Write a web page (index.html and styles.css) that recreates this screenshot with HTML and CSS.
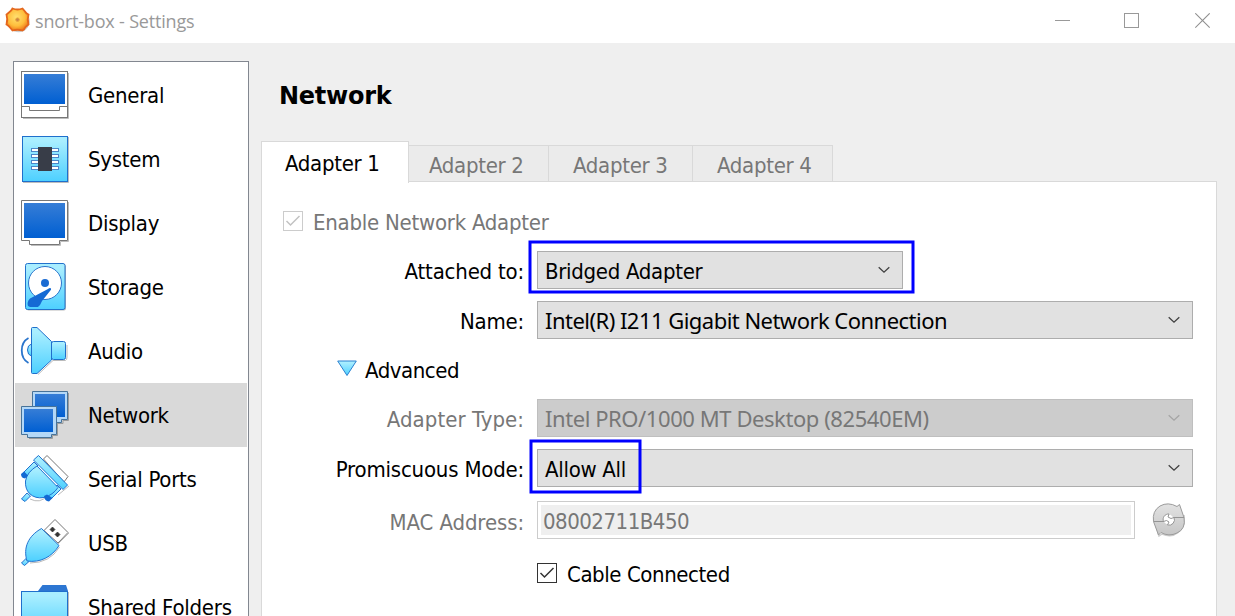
FILE: index.html
```html
<!DOCTYPE html>
<html lang="en">
<head>
<meta charset="utf-8">
<title>snort-box - Settings</title>
<link rel="stylesheet" href="styles.css">
</head>
<body>
<svg class="defs" width="0" height="0" aria-hidden="true">
  <defs>
    <linearGradient id="blue" x1="0" y1="0" x2="0" y2="1"><stop offset="0" stop-color="#367dd6"/><stop offset="1" stop-color="#005fd2"/></linearGradient>
    <linearGradient id="cyan" x1="0" y1="0" x2="0" y2="1"><stop offset=".1" stop-color="#a9eeff"/><stop offset="1" stop-color="#4dd0ff"/></linearGradient>
    <linearGradient id="gray" x1="0" y1="0" x2="0" y2="1"><stop offset="0" stop-color="#e2e2e2"/><stop offset="1" stop-color="#c6c6c6"/></linearGradient>
    <radialGradient id="gold" cx=".45" cy=".4" r=".6"><stop offset="0" stop-color="#ffe070"/><stop offset=".65" stop-color="#ffbe3c"/><stop offset="1" stop-color="#f0801c"/></radialGradient>
  </defs>
</svg>
<div class="window">
  <header class="titlebar">
    <svg class="app-icon" width="28" height="28" viewBox="0 0 28 28">
      <circle cx="14.700" cy="15.200" r="11" fill="#aaa" opacity=".6"/>
      <path d="M8.500 2.500 Q13.500 4.500 18.500 2.500 L21 5.500 Q22 7.500 24.500 8.500 Q23 13.500 24.500 18.500 L21.500 21 Q20.500 23.500 18.500 24.500 Q13.500 23 8.500 24.500 L6 21.500 Q4.500 19.500 2.500 18.500 Q4 13.500 2.500 8.500 L5.500 6 Q7.500 4.500 8.500 2.500Z" fill="url(#gold)" stroke="#e4661c" stroke-width="1.800"/>
      <circle cx="13.500" cy="13.700" r="1.800" fill="#c98446" stroke="#e8a33c"/>
    </svg>
    <span class="title">snort-box - Settings</span>
    <div class="controls">
      <svg width="16" height="16"><path d="M0 7.500H15" stroke="#999"/></svg>
      <svg width="16" height="16"><rect x=".5" y=".5" width="14" height="14" fill="none" stroke="#999"/></svg>
      <svg width="16" height="16"><path d="M.3 .3L14.700 14.700M14.700 .3L.3 14.700" stroke="#909090" stroke-width="1.100"/></svg>
    </div>
  </header>
  <div class="body">
    <nav class="sidebar">
      <div class="item">
        <svg class="icon" viewBox="0 0 50 50"><path d="M3 48.500H48.500V3" stroke="#bdbdbd" fill="none"/><rect x="1.500" y="1.500" width="46" height="46" fill="#fff" stroke="#777"/><rect x="4" y="4" width="41" height="30" fill="url(#blue)"/><path d="M1.500 36.500H9.500V40.500H39.500V36.500H47.500" fill="none" stroke="#777"/></svg>
        <span>General</span>
      </div>
      <div class="item">
        <svg class="icon" viewBox="0 0 50 50"><path d="M3 48.500H48.500V3" stroke="#bdbdbd" fill="none"/><rect x="2.500" y="2.500" width="45" height="45" fill="url(#cyan)" stroke="#1f6fcc"/><g fill="#fff" stroke="#4a86c8"><rect x="11.500" y="14.500" width="27" height="3"/><rect x="11.500" y="20.500" width="27" height="3"/><rect x="11.500" y="26.500" width="27" height="3"/><rect x="11.500" y="32.500" width="27" height="3"/></g><rect x="18" y="13" width="14" height="24" fill="#383d48"/></svg>
        <span>System</span>
      </div>
      <div class="item">
        <svg class="icon" viewBox="0 0 50 50"><path d="M11 47.500H40.500V43.500H48.500V4" stroke="#bdbdbd" fill="none"/><path d="M1.500 2.500H47.500V42.500H39.500V46.500H9.500V42.500H1.500Z" fill="#fff" stroke="#777"/><rect x="4" y="5" width="41" height="35" fill="url(#blue)"/></svg>
        <span>Display</span>
      </div>
      <div class="item">
        <svg class="icon" viewBox="0 0 50 50"><rect x="6.500" y="2.500" width="39.500" height="46" rx="2" fill="#bbb"/><rect x="5.500" y="1.500" width="39.500" height="46" rx="2" fill="url(#cyan)" stroke="#2372cc"/><circle cx="25" cy="21" r="16.500" fill="#fff" stroke="#2a75cc"/><circle cx="25" cy="21" r="4" fill="#1a6bd3"/><path d="M31 26.500Q30 25.500 28 27L10 36.500Q6.500 40 8 44L10 45H18Q20.500 43 22 39L30 29Q31.500 27.500 31 26.500Z" fill="#156ad4"/></svg>
        <span>Storage</span>
      </div>
      <div class="item">
        <svg class="icon" viewBox="0 0 50 50"><path d="M18 48.500L33 34.500H45.500Q47 34 47 31V19" fill="none" stroke="#bbb"/><g fill="url(#cyan)" stroke="#1f6fcc"><path d="M11.500 18Q7.500 19 7.500 24T11.500 30Z"/><rect x="31.500" y="15.500" width="14" height="18" rx="2"/><path d="M12.500 1.500H17L31.500 15.500V34L17 47.500H12.500Q11.500 47.500 11.500 46.500V2.500Q11.500 1.500 12.500 1.500Z"/></g><path d="M8.500 12C-.5 17 -.5 32 8.500 37" fill="none" stroke="#2a75cc" stroke-width="1.800"/></svg>
        <span>Audio</span>
      </div>
      <div class="item selected">
        <svg class="icon" viewBox="0 0 50 50"><path d="M37 33.500H43V30.500H48.500V3M9 48.500H32.500V45.500H37.500V18" fill="none" stroke="#9b9b9b"/><path d="M12.500 1.500H47.500V29.500H41.500V32.500H18.500V29.500H12.500Z" fill="#b4d8f7" stroke="#477399"/><rect x="15" y="4" width="30" height="23" fill="url(#blue)"/><path d="M1.500 16.500H36.500V44.500H31.500V47.500H7.500V44.500H1.500Z" fill="#b4d8f7" stroke="#477399"/><rect x="4" y="19" width="29" height="23" fill="url(#blue)"/></svg>
        <span>Network</span>
      </div>
      <div class="item">
        <svg class="icon" viewBox="0 0 50 50"><path d="M38 41L49 32M10 45Q20 50 27 42" fill="none" stroke="#bbb"/><path d="M23.500 5L27 1.500L48 22.500L44 28Z" fill="#fff" stroke="#777"/><g fill="url(#cyan)" stroke="#1f72d0"><path d="M4 18L14 8L18 12L7 23Z"/><path d="M27 42L37 31L41 35L31 45Z"/><path d="M17 12Q7 18 5.500 27Q5 35 9.500 39.500Q15 45 24 43.500Q33 41 38 33.500Z"/><path d="M1.500 45L7 39L10.500 42L5 47.500Z"/><path d="M13.500 6L18.500 1.500L47.500 31L43 35.500Z"/></g><path d="M1 20L4 17.500L8 21.500L5 24.500Q1 24 1 20ZM24 42L27 40.500L32.500 44L29 47.500Q24.500 47 24 42Z" fill="#1269d3"/></svg>
        <span>Serial Ports</span>
      </div>
      <div class="item">
        <svg class="icon" viewBox="0 0 50 50"><path d="M37 27L49 15M10 45Q30 45 39.500 29" fill="none" stroke="#bbb"/><path d="M35 1.500L48 14.500L38 25L24 12.500Z" fill="#fff" stroke="#777"/><path d="M32.500 9L35 11.500L32.500 14L30 11.500ZM37.500 14L40 16.500L37.500 19L35 16.500Z" fill="#333" stroke="#333" stroke-width=".7"/><g fill="url(#cyan)" stroke="#1f72d0"><path d="M1.500 45L6 40.500L9 43.500L4.500 47.500Z"/><path d="M21.500 10.500L39 27.500C32 39 20 45 7 43C3 30 8 18 21.500 10.500Z"/></g></svg>
        <span>USB</span>
      </div>
      <div class="item">
        <svg class="icon" viewBox="0 0 50 50"><path d="M48.500 10V50" stroke="#bbb"/><path d="M18 9L22.500 3H46L48 9Z" fill="#2d76d2"/><rect x="1.500" y="9.500" width="46" height="44" fill="url(#cyan)" stroke="#1f6fcc"/></svg>
        <span>Shared Folders</span>
      </div>
    </nav>
    <main class="main">
      <h1 class="heading">Network</h1>
      <div class="tabs">
        <div class="tab active">Adapter 1</div>
        <div class="tab">Adapter 2</div>
        <div class="tab">Adapter 3</div>
        <div class="tab">Adapter 4</div>
      </div>
      <section class="panel">
        <div class="enable disabled">
          <svg class="check" viewBox="0 0 20 20"><rect x=".5" y=".5" width="19" height="19" fill="#fff" stroke="#ccc"/><path d="M3.500 10L7.500 14L16.500 5" fill="none" stroke="#c2c2c2" stroke-width="1.500"/></svg>
          <span>Enable Network Adapter</span>
        </div>
        <div class="row attached">
          <span class="label">Attached to:</span>
          <div class="combo short"><span>Bridged Adapter</span><svg class="arrow" viewBox="0 0 12 8"><path d="M.7 1.200L6 6.200L11.300 1.200"/></svg></div>
        </div>
        <div class="row name">
          <span class="label">Name:</span>
          <div class="combo"><span class="device">Intel(R) I211 Gigabit Network Connection</span><svg class="arrow" viewBox="0 0 12 8"><path d="M.7 1.200L6 6.200L11.300 1.200"/></svg></div>
        </div>
        <div class="advanced">
          <svg width="20" height="17" viewBox="0 0 20 17"><path d="M.7 1H19.300L10 15.500Z" fill="url(#cyan)" stroke="#2a80d0"/></svg>
          <span>Advanced</span>
        </div>
        <div class="row type disabled">
          <span class="label">Adapter Type:</span>
          <div class="combo"><span class="device model">Intel PRO/1000 MT Desktop (82540EM)</span><svg class="arrow" viewBox="0 0 12 8"><path d="M.7 1.200L6 6.200L11.300 1.200"/></svg></div>
        </div>
        <div class="row mode">
          <span class="label">Promiscuous Mode:</span>
          <div class="combo"><span>Allow All</span><svg class="arrow" viewBox="0 0 12 8"><path d="M.7 1.200L6 6.200L11.300 1.200"/></svg></div>
        </div>
        <div class="row mac disabled">
          <span class="label">MAC Address:</span>
          <div class="field"><span>08002711B450</span></div>
          <svg class="refresh" width="34" height="34" viewBox="0 0 34 34"><path d="M3 20Q5 26 7 33L10 31Q25 37 32 21V12" fill="none" stroke="#ccc" stroke-width="1.500"/><path d="M1.500 18.500Q0 8 8 3Q16 -1.500 25 3.500L27.500 1.500L32 14.500Q34 26 25 30Q17 34 9 29.500L6.500 32Z" fill="url(#gray)" stroke="#9b9b9b"/><circle cx="16.500" cy="16.500" r="5" fill="#fff"/><path d="M11.500 18.500A5.500 5.500 0 0 1 17 11L16 14L19 15.500L22 14.500A5.500 5.500 0 0 1 15.500 22L17 19L14.500 17.500Z" fill="#fff" stroke="#949494"/><path d="M1.500 18.500H12M21.500 14.500H32" stroke="#949494"/></svg>
        </div>
        <div class="cable">
          <svg class="check" viewBox="0 0 20 20"><rect x=".5" y=".5" width="19" height="19" fill="#fff" stroke="#333"/><path d="M3.500 10L7.500 14L16.500 5" fill="none" stroke="#333" stroke-width="1.500"/></svg>
          <span>Cable Connected</span>
        </div>
      </section>
    </main>
  </div>
  <svg class="marks" width="1235" height="616"><g fill="none" stroke="#00f" stroke-width="3"><rect x="530" y="242" width="383" height="50"/><rect x="531" y="441" width="109" height="51"/></g></svg>
</div>
</body>
</html>
```
FILE: styles.css
```css
* { box-sizing: border-box; }
body {
  margin: 0;
  font: 22px/26px "DejaVu Sans Condensed", "DejaVu Sans", sans-serif;
  letter-spacing: -0.2px;
  color: #000;
}
svg { display: block; flex: none; }
.defs { position: absolute; }
.window {
  position: relative;
  width: 1235px;
  height: 616px;
  overflow: hidden;
  background: #efefef;
}
.titlebar {
  display: flex;
  height: 43px;
  padding-left: 4px;
  background: #fff;
}
.app-icon { margin-top: 6px; }
.title {
  margin: 8px 0 0 3px;
  font: 18px/26px "Open Sans", sans-serif;
  letter-spacing: -0.19px;
  color: #999;
}
.controls {
  display: flex;
  gap: 54px;
  margin-left: auto;
  padding: 13px 24px 0 0;
}
.controls svg:first-child { margin-right: -1px; }
.controls svg:last-child { margin-left: 1px; }

.body { display: flex; height: 573px; padding-top: 18px; }
.sidebar {
  width: 236px;
  height: 600px;
  margin-left: 13px;
  padding: 1px;
  background: #fff;
  border: 1px solid #828790;
  flex: none;
}
.item {
  display: flex;
  align-items: center;
  gap: 18px;
  height: 64px;
  padding-left: 5px;
  letter-spacing: -0.26px;
  white-space: nowrap;
}
.item span { padding-top: 2px; }
.icon { width: 50px; height: 50px; }
.selected { background: #d9d9d9; }

.main { width: 956px; margin-left: 12px; flex: none; }
.heading {
  height: 80px;
  margin: 0;
  padding: 21px 0 0 18px;
  font: bold 24px/28px "DejaVu Sans", sans-serif;
  letter-spacing: -0.25px;
}
.tabs { display: flex; height: 40px; align-items: flex-end; letter-spacing: -0.3px; }
.tab {
  width: 144px;
  height: 36px;
  padding: 7px 0 0 24px;
  color: #777;
  background: #ebebeb;
  border: 1px solid #d9d9d9;
  border-width: 1px 1px 0 0;
}
.tab:nth-child(2) { width: 140px; padding-left: 20px; }
.tab:last-child { width: 140px; }
.tab.active {
  z-index: 1;
  width: 148px;
  height: 42px;
  margin-bottom: -2px;
  padding: 9px 0 0 23px;
  color: #000;
  background: #fff;
  border-width: 1px 1px 0 1px;
}
.panel {
  height: 460px;
  padding: 18px 23px 0 21px;
  background: #fff;
  border: 1px solid #d9d9d9;
}
.disabled { color: #777; }
.enable { display: flex; align-items: center; gap: 10px; height: 44px; letter-spacing: -0.25px; }
.enable span, .advanced span, .cable span { padding-top: 2px; }
.check { width: 20px; height: 20px; margin-top: -2px; }
.row { display: flex; align-items: center; height: 38px; }
.label { width: 241px; margin-right: 13px; padding-top: 4px; text-align: right; white-space: nowrap; }
.combo {
  display: flex;
  align-items: center;
  justify-content: space-between;
  width: 656px;
  height: 38px;
  padding: 0 12px 0 7px;
  white-space: nowrap;
  background: #e1e1e1;
  border: 1px solid #adadad;
}
.combo span { padding-top: 4px; letter-spacing: -0.3px; }
.short { width: 366px; }
.disabled .combo { background: #ccc; border-color: #bfbfbf; }
.combo .device { padding-top: 0; font-family: "Noto Sans", sans-serif; letter-spacing: -0.53px; }
.combo .model { letter-spacing: -0.43px; }
.arrow { width: 12px; height: 8px; margin-top: -1px; fill: none; stroke: #404040; stroke-width: 1.3; }
.disabled .arrow { stroke: #a5a5a5; }
.attached { margin-top: 7px; }
.name, .mode { margin-top: 12px; }
.advanced { display: flex; align-items: center; gap: 8px; height: 38px; margin: 12px 0 10px 54px; letter-spacing: -0.45px; }
.advanced svg { margin-top: -4px; }
.type .label { letter-spacing: 0.05px; }
.mac { margin-top: 14px; }
.mac .label { padding-top: 6px; letter-spacing: -0.1px; }
.field {
  display: flex;
  align-items: center;
  width: 598px;
  height: 38px;
  padding-left: 3px;
  border: 1px solid #ccc;
  background: #efefef;
  box-shadow: inset 0 0 0 3px #fff;
  letter-spacing: -0.5px;
}
.field span { padding: 4px 0 0 2px; }
.refresh { margin-left: 17px; }
.cable { display: flex; align-items: center; gap: 10px; height: 38px; margin: 16px 0 0 254px; letter-spacing: -0.42px; }
.marks { position: absolute; inset: 0; pointer-events: none; }
```
